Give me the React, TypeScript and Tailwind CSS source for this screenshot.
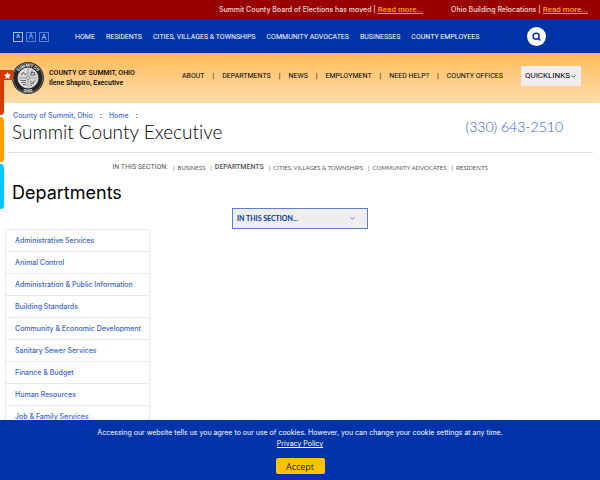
import { ChevronDown, Search } from "lucide-react";

const topLinks = [
  "Home",
  "Residents",
  "Cities, Villages & Townships",
  "Community Advocates",
  "Businesses",
  "County Employees",
];

const mainLinks = [
  "About",
  "Departments",
  "News",
  "Employment",
  "Need Help?",
  "County Offices",
];

const sectionLinks = [
  "Business",
  "Departments",
  "Cities, Villages & Townships",
  "Community Advocates",
  "Residents",
];

const departments = [
  "Administrative Services",
  "Animal Control",
  "Administration & Public Information",
  "Building Standards",
  "Community & Economic Development",
  "Sanitary Sewer Services",
  "Finance & Budget",
  "Human Resources",
  "Job & Family Services",
  "Law & Risk Management",
];

function Seal() {
  return (
    <svg viewBox="0 0 64 64" className="size-8 shrink-0" aria-label="County seal">
      <defs>
        <path id="ring-top" d="M9.500 32a22.500 22.500 0 0 1 45 0" />
        <path id="ring-bottom" d="M3.500 32a28.500 28.500 0 0 0 57 0" />
      </defs>
      <circle cx="32" cy="32" r="32" fill="#262626" />
      <circle cx="32" cy="32" r="30" fill="none" stroke="#bbb" strokeWidth="1" />
      <circle cx="32" cy="32" r="20" fill="#d8d8d8" stroke="#fff" strokeWidth="1.500" />
      <g fill="#fff" fontSize="8" fontWeight="700" textAnchor="middle">
        <text>
          <textPath href="#ring-top" startOffset="50%">SUMMIT CO</textPath>
        </text>
        <text>
          <textPath href="#ring-bottom" startOffset="50%">OHIO</textPath>
        </text>
      </g>
      <g fill="none" stroke="#444" strokeWidth="1.500">
        <path d="M13 32h38M32 13v38" stroke="#888" />
        <path d="M18 27l5-6 4 5 3-3M19 24l3-3M36 26h11M38 26v-5h7v5M40 21v-4" />
        <path d="M17 37h11M19 41h9M22 45h6M36 38l5 3 6-4M37 43l7-1M36 46l4 1" />
      </g>
      <circle cx="32" cy="32" r="3" fill="#eee" stroke="#555" />
    </svg>
  );
}

function SideTabs() {
  return (
    <div className="absolute left-0 top-[70px] flex flex-col gap-0.5">
      <div className="relative h-[45px] w-1 rounded-br-sm bg-[#d63a00] shadow">
        <div className="absolute left-0 top-0 flex h-[10px] w-[13px] items-center justify-end bg-[#d63a00] pr-0.5">
          <svg viewBox="0 0 24 24" className="size-[7px]" fill="#fff">
            <path d="M12 0l3.700 8 8.300 1-6.200 6 1.700 9-7.500-4.500L4.500 24l1.700-9L0 9l8.300-1z" />
          </svg>
        </div>
      </div>
      <div className="h-[45px] w-1 rounded-r-sm bg-[#ff9c00] shadow" />
      <div className="h-[45px] w-1 rounded-r-sm bg-[#00c8fa] shadow" />
    </div>
  );
}

function App() {
  return (
    <div className="relative h-screen overflow-hidden bg-white font-['Inter',sans-serif] text-black">
      <div className="flex h-5 items-center justify-end bg-[#990000] pr-3 text-[7px] font-medium whitespace-nowrap text-[#f5dcdc]">
        <div className="flex items-baseline gap-0.5">
          Summit County Board of Elections has moved |
          <a href="#" className="font-['Roboto',sans-serif] text-[8px] text-[#ffa51f] underline">
            Read more...
          </a>
        </div>
        <div className="ml-7 flex items-baseline gap-0.5">
          Ohio Building Relocations |
          <a href="#" className="font-['Roboto',sans-serif] text-[8px] text-[#ffa51f] underline">
            Read more...
          </a>
        </div>
      </div>

      <div className="flex h-[33px] items-center bg-[#0033a8] pl-[13px] text-white">
        <div className="flex w-[62px] items-center gap-[3px] text-[#a9c0f5]">
          <button className="flex size-[10px] items-center justify-center border border-[#a9c0f5] text-[5px] leading-none font-bold">A</button>
          <button className="flex size-[10px] items-center justify-center border border-[#5c7fd0] text-[7px] leading-none">A</button>
          <button className="flex size-[10px] items-center justify-center border border-[#5c7fd0] text-[8px] leading-none">A</button>
        </div>
        <nav className="mt-0.5 flex gap-[11px] font-['Roboto',sans-serif] text-[7px] uppercase whitespace-nowrap">
          {topLinks.map((l) => (
            <a key={l} href="#">{l}</a>
          ))}
        </nav>
        <button aria-label="Search" className="mr-[54px] ml-auto flex size-[19px] items-center justify-center rounded-full bg-white text-[#0033a8]">
          <Search className="size-[9px]" strokeWidth={4} />
        </button>
      </div>

      <header className="flex h-[50px] items-center bg-linear-to-b from-[#ffbb55] to-[#ffdcaa] pr-[19px] pl-3 font-['Roboto',sans-serif]">
        <Seal />
        <div className="ml-[5px] text-[7px] leading-[10px] font-medium whitespace-nowrap">
          <div className="uppercase">County of Summit, Ohio</div>
          <div>Ilene Shapiro, Executive</div>
        </div>
        <div className="mb-1 ml-auto flex items-center">
          <nav className="flex text-[7px] uppercase whitespace-nowrap">
            {mainLinks.map((l, i) => (
              <span key={l}>
                {i > 0 && <span className="mx-2">|</span>}
                <a href="#">{l}</a>
              </span>
            ))}
          </nav>
          <button className="ml-[18px] flex h-5 items-center bg-[#eee] px-1 text-[8px] uppercase">
            Quicklinks
            <ChevronDown className="size-[7px]" />
          </button>
        </div>
      </header>

      <div className="mr-[7px] ml-2 flex h-[50px] justify-between border-b border-[#ddd] pr-[30px] pl-1">
        <div>
          <div className="mt-[8px] flex gap-[7px] pl-px text-[7px] leading-[10px] font-medium text-[#3f70d8]">
            <a href="#">County of Summit, Ohio</a>
            <span className="text-black">:</span>
            <a href="#">Home</a>
            <span className="text-black">:</span>
          </div>
          <h1 className="font-['Lato',sans-serif] text-[19px] leading-[22px] font-light [font-variant-ligatures:none]">Summit County Executive</h1>
        </div>
        <a href="#" className="mt-[13px] font-['Lato',sans-serif] text-[14px] leading-[22px] font-light text-[#2d5fd0]">(330) 643-2510</a>
      </div>

      <nav className="mt-2 flex h-3 items-center justify-center font-['Lato',sans-serif] text-[6px] text-[#555] uppercase whitespace-nowrap">
        <span className="font-['Roboto',sans-serif] text-[7px]">In this section:</span>
        {sectionLinks.map((l) => (
          <span key={l} className="ml-[5px] flex items-center gap-[3px]">
            <span>|</span>
            <a href="#" className={l === "Departments" ? "font-['Roboto',sans-serif] text-[7px] font-medium" : ""}>{l}</a>
          </span>
        ))}
      </nav>

      <h2 className="mt-[9px] pl-3 text-[18px] leading-[22px]">Departments</h2>
      <div className="relative mx-auto mt-1 w-[136px]">
        <select aria-label="In this section" className="block h-[21px] w-full appearance-none border border-[#5b7fca] bg-[#eee] px-1 font-['Lato',sans-serif] text-[7px] font-bold text-[#0033a8]">
          <option>IN THIS SECTION...</option>
        </select>
        <ChevronDown className="pointer-events-none absolute top-[7px] right-3 size-[7px] text-[#0033a8]" />
      </div>

      <ul className="ml-[5px] w-[145px] border border-[#e9e9e9] text-[7px] font-medium text-[#3a67c8]">
        {departments.map((d) => (
          <li key={d} className="flex h-[22px] items-center border-b border-[#e9e9e9] pt-0.5 pl-[9px] whitespace-nowrap">
            <a href="#">{d}</a>
          </li>
        ))}
      </ul>

      <SideTabs />

      <div className="fixed inset-x-0 bottom-0 flex flex-col items-center bg-[#0033a8] pt-[7px] pb-[6px] text-[7px] leading-[11px] text-white">
        <p>
          Accessing our website tells us you agree to our use of cookies. However, you can change your cookie settings at any time.
        </p>
        <a href="#" className="underline">Privacy Policy</a>
        <button className="mt-[9px] h-4 w-[49px] rounded-[2px] bg-[#ffc107] font-['Open_Sans',sans-serif] text-[9px] text-[#212529]">
          Accept
        </button>
      </div>
    </div>
  );
}

export default App;
